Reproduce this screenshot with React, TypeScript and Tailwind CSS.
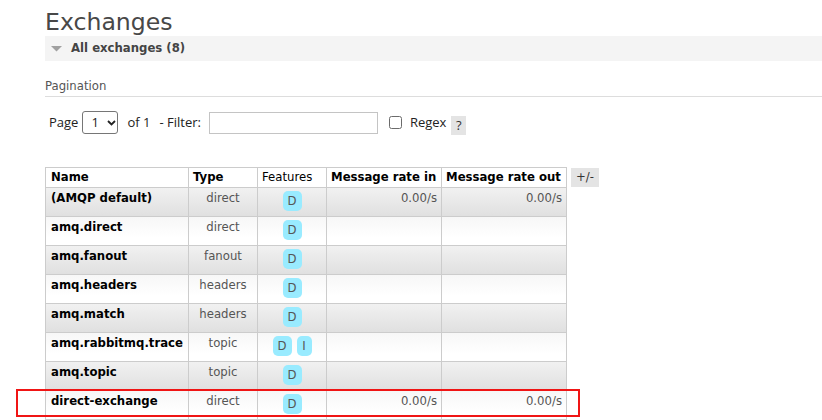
import React from "react";

type Row = { name: string; type: string; features: string[]; rin: string; rout: string };

const rows: Row[] = [
  { name: "(AMQP default)", type: "direct", features: ["D"], rin: "0.00/s", rout: "0.00/s" },
  { name: "amq.direct", type: "direct", features: ["D"], rin: "", rout: "" },
  { name: "amq.fanout", type: "fanout", features: ["D"], rin: "", rout: "" },
  { name: "amq.headers", type: "headers", features: ["D"], rin: "", rout: "" },
  { name: "amq.match", type: "headers", features: ["D"], rin: "", rout: "" },
  { name: "amq.rabbitmq.trace", type: "topic", features: ["D", "I"], rin: "", rout: "" },
  { name: "amq.topic", type: "topic", features: ["D"], rin: "", rout: "" },
  { name: "direct-exchange", type: "direct", features: ["D"], rin: "0.00/s", rout: "0.00/s" },
];

export default function App() {
  return (
    <div className="relative w-[822px] h-[420px] overflow-hidden bg-white font-['DejaVu_Sans',sans-serif] text-[11.7px]">
      <div className="pl-[45px]">
        <h1 className="pt-[9px] text-[23.6px] leading-[27px] text-[#484848]">Exchanges</h1>

        <div className="flex h-[25px] items-center bg-[#f4f4f4] pl-[6px]">
          <svg width="11" height="6" viewBox="0 0 11 6" className="block">
            <polygon points="0,0 11,0 5.5,5.5" fill="#a0a0a0" />
          </svg>
          <span className="ml-[9px] font-bold leading-[15px] text-[#444]">All exchanges (8)</span>
        </div>

        <div className="mt-[18px] h-[18px] border-b border-[#dddddd] leading-[15px] text-[#555]">Pagination</div>

        <div className="mt-[14px] flex h-[23px] items-center font-['Open_Sans',sans-serif] text-[13px] text-[#222]">
          <span className="ml-[4px]">Page</span>
          <div className="ml-[4px] flex h-[23px] w-[36px] items-center rounded-[3px] border border-[#767676] bg-white pl-[8px]">
            <span className="leading-none">1</span>
            <svg width="9" height="6" viewBox="0 0 9 6" className="ml-[8px] block">
              <polyline points="1,1 4.5,4.5 8,1" fill="none" stroke="#222" strokeWidth="1.8" />
            </svg>
          </div>
          <span className="ml-[9px]">of 1</span>
          <span className="ml-[9px]">- Filter:</span>
          <div className="ml-[8px] h-[22px] w-[169px] border border-[#c4c4c4] bg-white" />
          <div className="ml-[11px] h-[13px] w-[13px] rounded-[2.5px] border border-[#6b6b6b] bg-white" />
          <span className="ml-[8px]">Regex</span>
          <span className="ml-[5px] mt-[6px] flex h-[19px] w-[15px] items-center justify-center bg-[#e4e4e4] text-[#333]">?</span>
        </div>

        <div className="mt-[33px] flex items-start">
          <div className="w-[522px]">
            <div className="flex h-[21px] border-y border-l border-[#cccccc] bg-white font-bold leading-[15px] text-black">
              <div className="w-[143px] border-r border-[#cccccc] pl-[5px] pt-[2px]">Name</div>
              <div className="w-[69px] border-r border-[#cccccc] pl-[4px] pt-[2px]">Type</div>
              <div className="w-[69px] border-r border-[#cccccc] pl-[4px] pt-[2px] font-normal">Features</div>
              <div className="w-[115px] border-r border-[#cccccc] pl-[4px] pt-[2px]">Message rate in</div>
              <div className="w-[125px] border-r border-[#cccccc] pl-[4px] pt-[2px]">Message rate out</div>
            </div>
            {rows.map((r, i) => (
              <div
                key={r.name}
                className={
                  "flex h-[29px] border-b border-l border-[#cccccc] leading-[15px] " +
                  (i % 2 === 0
                    ? "bg-[linear-gradient(to_bottom,#f1f1f1,#e0e0e0)]"
                    : "bg-[linear-gradient(to_bottom,#f7f7f7,#ffffff_75%)]")
                }
              >
                <div className="w-[143px] border-r border-[#cccccc] pl-[5px] pt-[3px] font-bold text-black">{r.name}</div>
                <div className="w-[69px] border-r border-[#cccccc] pt-[3px] text-center text-[#555]">{r.type}</div>
                <div className="flex w-[69px] justify-center gap-[5px] border-r border-[#cccccc] pt-[3px]">
                  {r.features.map((f) => (
                    <span
                      key={f}
                      className={
                        "flex h-[20px] items-center justify-center rounded-[5px] bg-[#99ebff] leading-[20px] text-[#555] " +
                        (f === "I" ? "w-[15px]" : "w-[19px]")
                      }
                    >
                      {f}
                    </span>
                  ))}
                </div>
                <div className="w-[115px] border-r border-[#cccccc] pr-[4px] pt-[3px] text-right text-[#555]">{r.rin}</div>
                <div className="w-[125px] border-r border-[#cccccc] pr-[4px] pt-[3px] text-right text-[#555]">{r.rout}</div>
              </div>
            ))}
          </div>
          <div className="ml-[4px] mt-[1px] flex h-[19px] w-[28px] items-center justify-center bg-[#e4e4e4] text-[#333]">+/-</div>
        </div>
      </div>

      <div className="absolute left-[16px] top-[389px] h-[28px] w-[564px] border-2 border-[#f01515]" />
    </div>
  );
}
